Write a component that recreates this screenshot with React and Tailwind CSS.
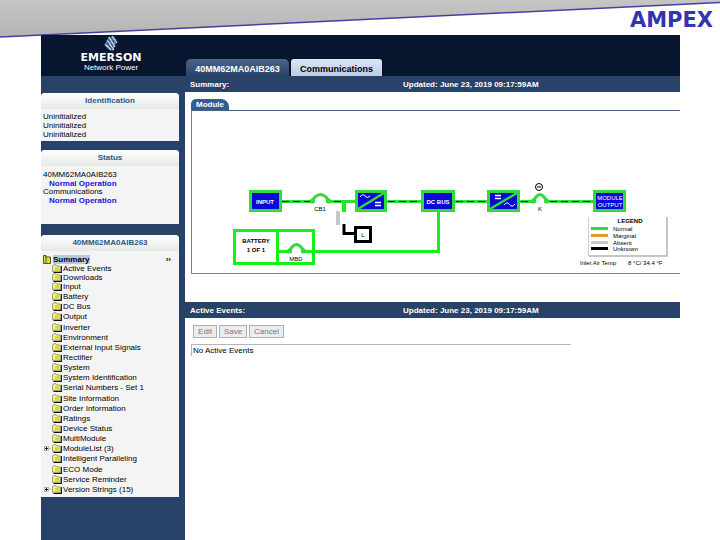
const treeTop = ["Active Events", "Downloads"];

const treeItems = [
  { name: "Input" },
  { name: "Battery" },
  { name: "DC Bus" },
  { name: "Output" },
  { name: "Inverter" },
  { name: "Environment" },
  { name: "External Input Signals" },
  { name: "Rectifier" },
  { name: "System" },
  { name: "System Identification" },
  { name: "Serial Numbers - Set 1" },
  { name: "Site Information" },
  { name: "Order Information" },
  { name: "Ratings" },
  { name: "Device Status" },
  { name: "MultiModule" },
  { name: "ModuleList (3)", more: true },
  { name: "Intelligent Paralleling" },
  { name: "ECO Mode" },
  { name: "Service Reminder" },
  { name: "Version Strings (15)", more: true },
];

const legend = [
  { label: "Normal", color: "#2fdc3c", y: 228 },
  { label: "Marginal", color: "#e39a2d", y: 235 },
  { label: "Absent", color: "#c8c8c8", y: 242 },
  { label: "Unknown", color: "#000000", y: 248 },
];

const Folder = () => (
  <svg viewBox="0 0 10 9" className="w-[10px] h-[9px] shrink-0">
    <path d="M9.3 2 V8.3 H1.5" fill="none" stroke="#111" strokeWidth="1.2" />
    <path d="M0.5 2 L1.5 0.8 H4 L5 2 H8.3 V7.3 H0.5 Z" fill="#f0f0a0" stroke="#8b8b58" strokeWidth="0.8" />
    <path d="M3 3 H7 V6.5 H3 Z" fill="#d6dc28" />
  </svg>
);

const TreeRow = ({ name, more }) => (
  <li className="flex items-center h-[9px]">
    <span className="w-[11px] pl-[3px] shrink-0">
      {more && (
        <svg viewBox="0 0 7 5" className="w-[7px] h-[5px]">
          <rect x="0.5" y="0.5" width="4" height="4" fill="#fff" stroke="#888" strokeWidth="0.6" />
          <path d="M1 2.5 H4 M2.5 1 V4" stroke="#000" strokeWidth="0.9" />
          <path d="M5 2.5 H7" stroke="#999" strokeWidth="0.6" />
        </svg>
      )}
    </span>
    <Folder />
    <a href="#" className="pl-px">{name}</a>
  </li>
);

const Panel = ({ title, children, className }) => (
  <section className={`bg-[#f4f4f4] rounded-t-[4px] overflow-hidden ${className}`}>
    <h2 className="h-[16px] leading-[16px] text-center font-bold text-[#2c5a86] bg-linear-to-b from-white to-[#e6e9e6]">
      {title}
    </h2>
    {children}
  </section>
);

const Bar = ({ title, className }) => (
  <div className={`flex items-center bg-[#294368] text-white font-bold pl-[5px] ${className}`}>
    <span className="w-[213px]">{title}</span>
    <span>Updated: June 23, 2019 09:17:59AM</span>
  </div>
);

const Breaker = ({ x, y, w }) => (
  <g>
    <rect x={x} y={y - 3} width={w} height="6" fill="#fff" />
    <path
      d={`M${x + 1} ${y} L${x + 4} ${y - 4} Q${x + w / 2} ${y - 9} ${x + w - 4} ${y - 4} L${x + w - 1} ${y}`}
      fill="none"
      stroke="#2fdc3c"
      strokeWidth="3"
    />
    <circle cx={x + 1.5} cy={y} r="2.6" fill="#2fdc3c" />
    <circle cx={x + w - 1.5} cy={y} r="2.6" fill="#2fdc3c" />
  </g>
);

const Box = ({ x, w }) => (
  <rect x={x + 1.5} y="191.5" width={w - 3} height="19" fill="#0808d8" stroke="#2fdc3c" strokeWidth="3" />
);

const Diagram = () => (
  <svg viewBox="192 111 488 162" className="block w-[488px] h-[162px]" fontFamily="Liberation Sans, sans-serif" fontSize="6">
    {/* main power path */}
    <path d="M282 201.5 H593" stroke="#2fdc3c" strokeWidth="3" />
    <path d="M282 201.5 H310 M334 201.5 H342 M388 201.5 H421 M456 201.5 H487 M521 201.5 H530 M550 201.5 H593" stroke="#0a3a0a" strokeWidth="1" strokeDasharray="7 4" />
    <Breaker x={311} y={201} w={19} />
    <Breaker x={532} y={201} w={16} />

    {/* bypass stub */}
    <path d="M344 201 V212" stroke="#15f01c" strokeWidth="4" />
    <path d="M338 211 V225" stroke="#c6c6c6" strokeWidth="4" />
    <path d="M344 224 V233.5 H355" fill="none" stroke="#000" strokeWidth="3" />
    <rect x="355.5" y="227.5" width="15" height="14" fill="#fff" stroke="#000" strokeWidth="3" />
    <text x="363" y="237" textAnchor="middle">L</text>

    {/* battery path */}
    <path d="M438.5 211 V251.5 H278" fill="none" stroke="#15f01c" strokeWidth="3" />
    <rect x="234.5" y="230.5" width="79" height="33" fill="none" stroke="#15f01c" strokeWidth="3" />
    <path d="M277.5 230 V264" stroke="#15f01c" strokeWidth="3" />
    <Breaker x={288} y={251} w={17} />

    <Box x={249} w={33} />
    <Box x={355} w={32} />
    <Box x={421} w={34} />
    <Box x={487} w={33} />
    <Box x={593} w={33} />
    <path d="M358 209 L384 193 M490 209 L517 193" stroke="#2fdc3c" strokeWidth="2.5" />
    <path d="M360 197 Q362.5 193 365 196 T370 196 M504 205 Q507 201 509.5 204.5 T515 204" fill="none" stroke="#fff" />
    <path d="M375 202.5 H381 M375 205.5 H381 M495 195.5 H501 M495 198.5 H501" stroke="#fff" strokeWidth="1.3" />

    <g fill="#fff" fontWeight="bold" textAnchor="middle">
      <text x="265" y="204">INPUT</text>
      <text x="438" y="204">DC BUS</text>
      <g fontWeight="normal">
        <text x="610" y="200">MODULE</text>
        <text x="610" y="207">OUTPUT</text>
      </g>
    </g>

    <g textAnchor="middle">
      <text x="320" y="211">CB1</text>
      <text x="296" y="261">MBD</text>
      <text x="540" y="211">K</text>
      <text x="256" y="243" fontWeight="bold">BATTERY</text>
      <text x="256" y="252" fontWeight="bold">1 OF 1</text>
    </g>

    <circle cx="539" cy="187" r="3.5" fill="#fff" stroke="#000" />
    <path d="M537 187 H541" stroke="#000" />

    {/* legend */}
    <path d="M588.5 217 V256 M588 255.5 H668" stroke="#cfcfcf" />
    <path d="M667 217 V256 H589" fill="none" stroke="#c6c6c6" strokeWidth="2" />
    <text x="630" y="223" textAnchor="middle" fontWeight="bold">LEGEND</text>
    {legend.map((item) => (
      <g key={item.label}>
        <rect x="591" y={item.y - 1} width="17" height="3" fill={item.color} />
        <text x="613" y={item.y + 3}>{item.label}</text>
      </g>
    ))}
    <text x="580" y="265">Inlet Air Temp</text>
    <text x="628" y="265">8 °C/ 34.4 °F</text>
  </svg>
);

const Logo = () => (
  <div className="w-[144px] h-full pr-[4px] flex flex-col items-center text-white">
    <svg viewBox="0 0 14 16" className="w-[14px] h-[16px] mt-px shrink-0">
      <path d="M5 1 L10 0 L13 5 L9 15 L4 13 L1 10 Z" fill="#395b86" />
      <path d="M5 1 L11 11 M8 0 L13 7 M3 4 L10 14 M1 8 L7 14" stroke="#dce8f5" strokeWidth="1.2" />
      <path d="M5 1 L1 10 M9 1 L4 12 M12 3 L8 15" stroke="#8fa9c8" strokeWidth="0.7" />
    </svg>
    <span className="font-['DejaVu_Sans'] font-bold text-[11px] leading-[11px]">EMERSON</span>
    <span className="text-[8px] leading-[9px]">Network Power</span>
  </div>
);

const App = () => {
  return (
    <div className="relative min-h-screen bg-white flex flex-col font-['Liberation_Sans',sans-serif] text-[8px] leading-[9px] text-black">
      <header className="h-[35px] flex justify-end pr-[7px] pt-[8px]">
        <svg viewBox="0 0 720 38" preserveAspectRatio="none" className="absolute left-0 top-0 w-full h-[38px]">
          <defs>
            <linearGradient id="banner" x1="0" y1="0" x2="0" y2="1">
              <stop offset="0" stopColor="#c4c6c4" />
              <stop offset="1" stopColor="#b3b3b3" />
            </linearGradient>
          </defs>
          <path d="M0 0 H720 V2.5 L0 37 Z" fill="url(#banner)" />
          <path d="M0 37 L720 2.5" stroke="#4540a0" strokeWidth="1.5" />
        </svg>
        <span className="relative font-['DejaVu_Sans'] font-bold text-[21px] leading-[24px] text-[#3333b3]">AMPEX</span>
      </header>

      <div className="relative ml-[41px] mr-[40px] grow flex flex-col">
        <div className="h-[41px] bg-[#07152f] flex">
          <Logo />
          <nav className="flex items-end gap-[2px] pl-px text-[9px] font-bold">
            <button className="h-[17px] w-[103px] rounded-t-[5px] bg-linear-to-b from-[#4a6588] to-[#294368] text-white pt-[4px]">40MM62MA0AIB263</button>
            <button className="h-[17px] w-[91px] rounded-t-[3px] bg-linear-to-b from-[#dde6f6] to-[#bccbe8] text-black pt-[4px]">Communications</button>
          </nav>
        </div>

        <div className="grow flex">
          <aside className="w-[144px] shrink-0 bg-[#294368] pt-[17px] pr-[6px]">
            <Panel title="Identification" className="h-[48px]">
              <div className="pl-[2px] pt-[3px]">
                <p>Uninitialized</p>
                <p>Uninitialized</p>
                <p>Uninitialized</p>
              </div>
            </Panel>

            <Panel title="Status" className="h-[74px] mt-[9px]">
              <div className="pl-[2px] pt-[4px]">
                <p>40MM62MA0AIB263</p>
                <a href="#" className="block pl-[6px] font-bold text-[#2010e0]">Normal Operation</a>
                <p className="leading-[8px]">Communications</p>
                <a href="#" className="block pl-[6px] font-bold text-[#2010e0]">Normal Operation</a>
              </div>
            </Panel>

            <Panel title="40MM62MA0AIB263" className="h-[262px] mt-[11px]">
              <div className="pt-[4px]">
                <div className="flex items-center h-[9px]">
                  <svg viewBox="0 0 9 9" className="w-[9px] h-[9px] ml-[2px] mr-px">
                    <path d="M0.5 0.5 H3 V2 H7.5 V8.5 H0.5 Z" fill="#dede3c" stroke="#555520" />
                    <path d="M3 1 V8" stroke="#555520" />
                  </svg>
                  <a href="#" className="bg-[#b5c9e6] font-bold pr-px">Summary</a>
                  <span className="ml-auto pr-[8px] font-bold">››</span>
                </div>
                <ul>
                  {treeTop.map((name) => (
                    <TreeRow key={name} name={name} />
                  ))}
                </ul>
                <ul className="h-[212px] flex flex-col justify-between">
                  {treeItems.map((item) => (
                    <TreeRow key={item.name} name={item.name} more={item.more} />
                  ))}
                </ul>
              </div>
            </Panel>
          </aside>

          <main className="grow min-w-0">
            <Bar title="Summary:" className="h-[16px]" />
            <div className="pt-[7px] pl-[6px]">
              <h3 className="w-[38px] h-[11px] leading-[11px] rounded-tl-[5px] rounded-tr-[8px] bg-[#2f5f92] text-white text-center font-bold">Module</h3>
              <div className="border border-r-0 border-[#808080] border-t-[#4a5f7c] overflow-hidden">
                <Diagram />
              </div>
            </div>

            <Bar title="Active Events:" className="h-[16px] mt-[28px]" />
            <div className="flex gap-[2px] pt-[7px] pl-[8px] text-[#777]">
              <button className="h-[13px] w-[24px] border border-[#b0b0b0] bg-[#ececec]">Edit</button>
              <button className="h-[13px] w-[28px] border border-[#b0b0b0] bg-[#ececec]">Save</button>
              <button className="h-[13px] w-[35px] border border-[#b0b0b0] bg-[#ececec]">Cancel</button>
            </div>
            <div className="ml-[6px] mr-[109px] mt-[6px] h-[12px] pl-px pt-px border-t border-l border-[#b5b5b5]">No Active Events</div>
          </main>
        </div>
      </div>
    </div>
  );
};

export default App;
